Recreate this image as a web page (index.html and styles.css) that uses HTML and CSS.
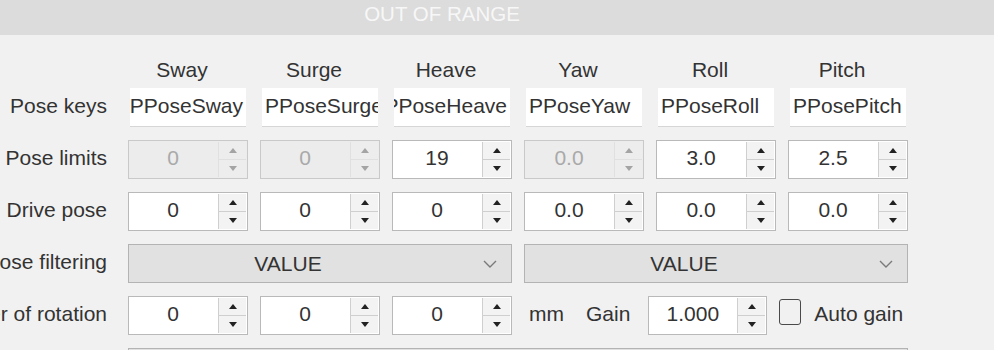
FILE: index.html
```html
<!DOCTYPE html>
<html lang="en">
<head>
    <meta charset="UTF-8">
    <meta name="viewport" content="width=device-width, initial-scale=1.0">
    <title>Pose settings</title>
    <link rel="stylesheet" href="styles.css">
</head>
<body>
    <!-- status bar -->
    <div class="status-bar">OUT OF RANGE</div>

    <div class="panel">
        <!-- column names -->
        <div class="corner"></div>
        <div class="col-name">Sway</div>
        <div class="col-name">Surge</div>
        <div class="col-name">Heave</div>
        <div class="col-name">Yaw</div>
        <div class="col-name">Roll</div>
        <div class="col-name">Pitch</div>

        <!-- pose keys -->
        <div class="row-label"><span>Pose keys</span></div>
        <div class="key-box scrolled"><span>PPoseSway</span></div>
        <div class="key-box"><span>PPoseSurge</span></div>
        <div class="key-box scrolled"><span>PPoseHeave</span></div>
        <div class="key-box"><span>PPoseYaw</span></div>
        <div class="key-box"><span>PPoseRoll</span></div>
        <div class="key-box"><span>PPosePitch</span></div>

        <!-- pose limits -->
        <div class="row-label"><span>Pose limits</span></div>
        <div class="spin disabled">
            <div class="spin-value">0</div>
            <div class="spin-buttons"><div class="spin-up"><i></i></div><div class="spin-down"><i></i></div></div>
        </div>
        <div class="spin disabled">
            <div class="spin-value">0</div>
            <div class="spin-buttons"><div class="spin-up"><i></i></div><div class="spin-down"><i></i></div></div>
        </div>
        <div class="spin">
            <div class="spin-value">19</div>
            <div class="spin-buttons"><div class="spin-up"><i></i></div><div class="spin-down"><i></i></div></div>
        </div>
        <div class="spin disabled">
            <div class="spin-value">0.0</div>
            <div class="spin-buttons"><div class="spin-up"><i></i></div><div class="spin-down"><i></i></div></div>
        </div>
        <div class="spin">
            <div class="spin-value">3.0</div>
            <div class="spin-buttons"><div class="spin-up"><i></i></div><div class="spin-down"><i></i></div></div>
        </div>
        <div class="spin">
            <div class="spin-value">2.5</div>
            <div class="spin-buttons"><div class="spin-up"><i></i></div><div class="spin-down"><i></i></div></div>
        </div>

        <!-- drive pose -->
        <div class="row-label"><span>Drive pose</span></div>
        <div class="spin">
            <div class="spin-value">0</div>
            <div class="spin-buttons"><div class="spin-up"><i></i></div><div class="spin-down"><i></i></div></div>
        </div>
        <div class="spin">
            <div class="spin-value">0</div>
            <div class="spin-buttons"><div class="spin-up"><i></i></div><div class="spin-down"><i></i></div></div>
        </div>
        <div class="spin">
            <div class="spin-value">0</div>
            <div class="spin-buttons"><div class="spin-up"><i></i></div><div class="spin-down"><i></i></div></div>
        </div>
        <div class="spin">
            <div class="spin-value">0.0</div>
            <div class="spin-buttons"><div class="spin-up"><i></i></div><div class="spin-down"><i></i></div></div>
        </div>
        <div class="spin">
            <div class="spin-value">0.0</div>
            <div class="spin-buttons"><div class="spin-up"><i></i></div><div class="spin-down"><i></i></div></div>
        </div>
        <div class="spin">
            <div class="spin-value">0.0</div>
            <div class="spin-buttons"><div class="spin-up"><i></i></div><div class="spin-down"><i></i></div></div>
        </div>

        <!-- pose filtering -->
        <div class="row-label"><span>Pose filtering</span></div>
        <div class="combo span-3">
            <div class="combo-value">VALUE</div>
            <svg class="chevron" width="14" height="8" viewBox="0 0 14 8"><polyline points="1,1 7,7 13,1" fill="none" stroke="#7a7a7a" stroke-width="1.4"/></svg>
        </div>
        <div class="combo span-3">
            <div class="combo-value">VALUE</div>
            <svg class="chevron" width="14" height="8" viewBox="0 0 14 8"><polyline points="1,1 7,7 13,1" fill="none" stroke="#7a7a7a" stroke-width="1.4"/></svg>
        </div>

        <!-- center of rotation -->
        <div class="row-label"><span>Center of rotation</span></div>
        <div class="spin">
            <div class="spin-value">0</div>
            <div class="spin-buttons"><div class="spin-up"><i></i></div><div class="spin-down"><i></i></div></div>
        </div>
        <div class="spin">
            <div class="spin-value">0</div>
            <div class="spin-buttons"><div class="spin-up"><i></i></div><div class="spin-down"><i></i></div></div>
        </div>
        <div class="spin">
            <div class="spin-value">0</div>
            <div class="spin-buttons"><div class="spin-up"><i></i></div><div class="spin-down"><i></i></div></div>
        </div>
        <div class="gain-group span-3">
            <span class="unit">mm</span>
            <span class="gain-label">Gain</span>
            <div class="spin gain-spin">
                <div class="spin-value">1.000</div>
                <div class="spin-buttons"><div class="spin-up"><i></i></div><div class="spin-down"><i></i></div></div>
            </div>
            <span class="check-box"></span>
            <span class="check-label">Auto gain</span>
        </div>

        <!-- next row (cut off) -->
        <div class="corner"></div>
        <div class="combo span-6 partial"></div>
    </div>
</body>
</html>
```

FILE: styles.css
```css
/* Pose settings form */
body {
    font-family: "Liberation Sans", Arial, sans-serif;
    font-size: 21px;
    color: #333;
    background-color: #f1f1f1;
    margin: 0;
    padding: 0;
    height: 100vh;
    overflow: hidden;
}

.status-bar {
    height: 35px;
    line-height: 27px;
    background-color: #dcdcdc;
    color: #f7f7f7;
    font-size: 20.5px;
    text-align: center;
    padding-right: 110px;
}

.panel {
    display: grid;
    grid-template-columns: 116px repeat(6, 120px);
    grid-template-rows: 53px repeat(5, 52px) 10px;
    column-gap: 12px;
    align-items: start;
}

.col-name {
    align-self: end;
    text-align: center;
    line-height: 29px;
    padding-right: 12px;
    padding-bottom: 4px;
}

.row-label {
    display: flex;
    justify-content: flex-end;
    white-space: nowrap;
    height: 39px;
    line-height: 35px;
    padding-right: 9px;
}

.key-box {
    display: flex;
    height: 39px;
    margin: 0 2px;
    padding: 0 3px;
    line-height: 35px;
    background-color: #fff;
    border-bottom: 1px solid #d6d6d6;
    box-sizing: border-box;
    overflow: hidden;
    white-space: nowrap;
}

.key-box.scrolled {
    justify-content: flex-end;
}

/* number spinner */
.spin {
    display: flex;
    height: 39px;
    box-sizing: border-box;
    border: 1px solid #b9b9b9;
    background-color: #fff;
}

.spin-value {
    flex: 1;
    text-align: center;
    line-height: 33px;
}

.spin-buttons {
    width: 27px;
    margin: 1px;
    display: flex;
    flex-direction: column;
    border-left: 1px solid #cfcfcf;
    background-color: #f3f3f3;
}

.spin-up,
.spin-down {
    flex: 1;
    display: flex;
    align-items: center;
    justify-content: center;
}

.spin-up {
    border-bottom: 1px solid #cfcfcf;
}

.spin-up i {
    border-left: 4px solid transparent;
    border-right: 4px solid transparent;
    border-bottom: 5px solid #222;
}

.spin-down i {
    border-left: 4px solid transparent;
    border-right: 4px solid transparent;
    border-top: 5px solid #222;
}

.spin.disabled {
    background-color: #ececec;
    border-color: #c9c9c9;
    color: #a9a9a9;
}

.spin.disabled .spin-buttons {
    background-color: #ededed;
    border-left-color: #e0e0e0;
}

.spin.disabled .spin-up {
    border-bottom-color: #e0e0e0;
}

.spin.disabled .spin-up i {
    border-bottom-color: #a4a4a4;
}

.spin.disabled .spin-down i {
    border-top-color: #a4a4a4;
}

/* drop down */
.combo {
    display: flex;
    align-items: center;
    height: 39px;
    box-sizing: border-box;
    border: 1px solid #b3b3b3;
    background-color: #e1e1e1;
}

.combo.partial {
    height: 10px;
    border-bottom: none;
}

.combo-value {
    flex: 1;
    text-align: center;
    padding-left: 4px;
    padding-right: 40px;
}

.chevron {
    margin-right: 14px;
}

.span-3 {
    grid-column: span 3;
}

.span-6 {
    grid-column: span 6;
}

.gain-group {
    display: flex;
    align-items: flex-start;
    height: 39px;
    line-height: 35px;
    white-space: nowrap;
}

.unit {
    margin-left: 5px;
}

.gain-label {
    margin-left: 22px;
}

.gain-spin {
    width: 119px;
    margin-left: 18px;
}

.check-box {
    width: 22px;
    height: 26px;
    margin: 3px 0 0 12px;
    border: 1.5px solid #4a4a4a;
    border-radius: 3px;
    box-sizing: border-box;
}

.check-label {
    margin-left: 13px;
}
```
